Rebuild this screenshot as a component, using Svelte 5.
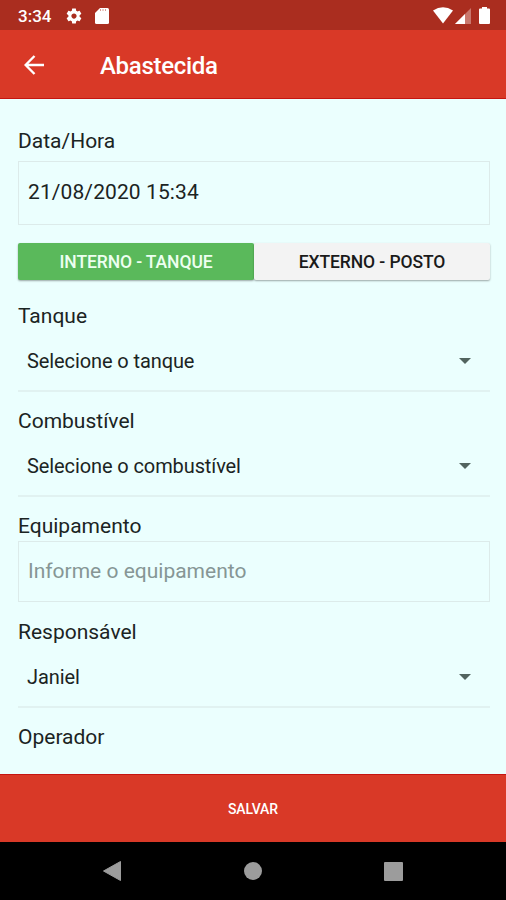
<script>
  let mode = $state('interno');
</script>

{#snippet select(label, value)}
  <div class="field">
    <div class="label">{label}</div>
    <div class="select">
      <span>{value}</span>
      <svg width="12" height="6" viewBox="0 0 12 6"><path d="M0 0h12L6 6z" fill="#52645f" /></svg>
    </div>
  </div>
{/snippet}

<div class="screen">
  <div class="status">
    <span class="clock">3:34</span>
    <svg class="gear" width="18" height="18" viewBox="0 0 24 24" fill="#fff"><path d="M19.43 12.98c.04-.32.07-.64.07-.98s-.03-.66-.07-.98l2.11-1.65c.19-.15.24-.42.12-.64l-2-3.46c-.12-.22-.39-.3-.61-.22l-2.49 1c-.52-.4-1.08-.73-1.69-.98l-.38-2.65C14.46 2.18 14.25 2 14 2h-4c-.25 0-.46.18-.49.42l-.38 2.65c-.61.25-1.17.59-1.69.98l-2.49-1c-.23-.09-.49 0-.61.22l-2 3.46c-.13.22-.07.49.12.64l2.11 1.65c-.04.32-.07.65-.07.98s.03.66.07.98l-2.11 1.65c-.19.15-.24.42-.12.64l2 3.46c.12.22.39.3.61.22l2.49-1c.52.4 1.08.73 1.69.98l.38 2.65c.03.24.24.42.49.42h4c.25 0 .46-.18.49-.42l.38-2.65c.61-.25 1.17-.59 1.69-.98l2.49 1c.23.09.49 0 .61-.22l2-3.46c.12-.22.07-.49-.12-.64l-2.11-1.65zM12 15.5c-1.93 0-3.5-1.57-3.5-3.5s1.57-3.5 3.5-3.5 3.5 1.57 3.5 3.5-1.57 3.5-3.5 3.5z" /></svg>
    <svg class="sd" width="14" height="16" viewBox="0 0 14 16"><path d="M5 0h7.500Q14 0 14 1.500v13Q14 16 12.500 16h-11Q0 16 0 14.500V5z" fill="#fff" /><path d="M5.500 1v2M8 1v2M10.500 1v2" stroke="#d99b92" stroke-width="1" /></svg>
    <span class="spacer"></span>
    <svg width="20" height="17" viewBox="0 0 20 17"><path d="M0 3.500Q10-3 20 3.500L10 16.500z" fill="#fff" /></svg>
    <svg class="signal" width="16" height="16" viewBox="0 0 16 16"><path d="M16 0v16H0z" fill="#c9776d" /><path d="M10 6v10H0z" fill="#fff" /></svg>
    <svg class="battery" width="11" height="17" viewBox="0 0 11 17"><path d="M3 0h5v1.500h2q1 0 1 1V16q0 1-1 1H1q-1 0-1-1V2.500q0-1 1-1h2z" fill="#fff" /></svg>
  </div>

  <header>
    <svg width="20" height="20" viewBox="0 0 20 20" fill="none" stroke="#fff" stroke-width="2.400"><path d="M20 10H2M10.500 1L1.600 10l8.900 9" /></svg>
    <h1>Abastecida</h1>
  </header>

  <main>
    <div class="date">
      <div class="label">Data/Hora</div>
      <div class="box">21/08/2020 15:34</div>
    </div>
    <div class="tabs">
      <button class:active={mode === 'interno'} onclick={() => (mode = 'interno')}>INTERNO - TANQUE</button>
      <button class:active={mode === 'externo'} onclick={() => (mode = 'externo')}>EXTERNO - POSTO</button>
    </div>
    {@render select('Tanque', 'Selecione o tanque')}
    {@render select('Combustível', 'Selecione o combustível')}
    <div class="field">
      <div class="label">Equipamento</div>
      <div class="box hint">Informe o equipamento</div>
    </div>
    {@render select('Responsável', 'Janiel')}
    <div class="label">Operador</div>
  </main>

  <button class="save">SALVAR</button>

  <nav>
    <svg width="18" height="20" viewBox="0 0 18 20"><path d="M17.500.5v19L.5 10z" fill="#9c9c9c" stroke="#9c9c9c" stroke-linejoin="round" /></svg>
    <span class="home"></span>
    <span class="recent"></span>
  </nav>
</div>

<style>
  :global(body) { margin: 0; }
  .screen {
    width: 506px;
    height: 900px;
    display: flex;
    flex-direction: column;
    overflow: hidden;
    background: #ebfffe;
    color: #1b2423;
    font-family: Roboto, sans-serif;
  }
  svg { display: block; flex: none; }
  button { border: 0; padding: 0; font-family: inherit; }
  .status {
    box-sizing: border-box;
    height: 30px;
    flex: none;
    display: flex;
    align-items: center;
    padding: 1px 16px 0 18px;
    background: #aa2d1f;
    color: #fff;
  }
  .clock { width: 47px; font-size: 17px; font-weight: 500; }
  .sd { margin-left: 12px; }
  .spacer { flex: 1; }
  .signal { margin-left: 2px; }
  .battery { margin-left: 8px; }
  header {
    box-sizing: border-box;
    height: 69px;
    flex: none;
    display: flex;
    align-items: center;
    padding: 2px 24px 0;
    background: #d93927;
    border-bottom: 1px solid #c51511;
    color: #fff;
  }
  h1 { margin: 2px 0 0 56px; font-size: 24px; line-height: 28px; font-weight: 500; letter-spacing: -0.3px; }
  main {
    box-sizing: border-box;
    flex: 1;
    min-height: 0;
    padding: 30px 16px 0 18px;
  }
  .label { height: 24px; line-height: 25px; font-size: 21px; }
  .date { height: 114px; }
  .box {
    box-sizing: border-box;
    height: 64px;
    margin-top: 8px;
    padding-left: 9px;
    border: 1px solid #dcebea;
    font-size: 21px;
    line-height: 60px;
    letter-spacing: 0.1px;
  }
  .tabs { display: flex; height: 37px; margin-bottom: 24px; }
  .tabs button {
    flex: 1;
    padding-top: 1px;
    border-radius: 2px;
    background: #f3f3f3;
    box-shadow: 0 1px 2px rgb(0 0 0 / 0.35);
    color: #1a1a1a;
    font-size: 17.500px;
    font-weight: 500;
    letter-spacing: -0.1px;
  }
  .tabs .active { background: #5ab95b; color: #edfff0; }
  .field { height: 105.200px; }
  .select {
    box-sizing: border-box;
    height: 64px;
    display: flex;
    justify-content: space-between;
    padding: 21px 19px 0 9px;
    border-bottom: 2px solid #e1f2f1;
    font-size: 20px;
    line-height: 25px;
    letter-spacing: -0.1px;
  }
  .select svg { margin-top: 9px; }
  .hint { height: 61px; margin-top: 3px; line-height: 59px; letter-spacing: 0; color: #869695; }
  .save {
    box-sizing: border-box;
    height: 68px;
    flex: none;
    padding-top: 1px;
    border-top: 1px solid #c51511;
    background: #d93927;
    color: #fff;
    font-size: 14px;
    font-weight: 500;
    letter-spacing: -0.1px;
  }
  nav {
    box-sizing: border-box;
    height: 58px;
    flex: none;
    display: flex;
    align-items: center;
    justify-content: space-between;
    padding: 0 103px;
    background: #000;
  }
  .home { width: 18px; height: 18px; border-radius: 50%; background: #9c9c9c; }
  .recent { width: 19px; height: 19px; border-radius: 1px; background: #9c9c9c; }
</style>
